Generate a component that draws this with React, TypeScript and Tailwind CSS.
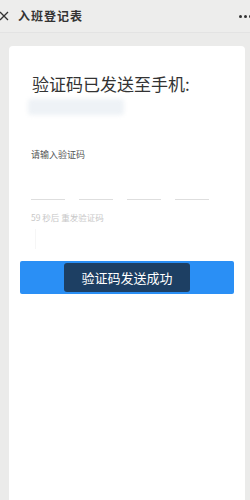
import React from "react";

export default function App() {
  return (
    <div
      className="w-[250px] h-[500px] bg-[#ebebea] flex flex-col overflow-hidden"
      style={{ fontFamily: '"Noto Sans CJK SC", "Noto Sans", sans-serif' }}
    >
      <div className="h-[33px] flex items-center border-b border-[#e3e3e3] bg-[#ededec] shrink-0">
        <svg width="10" height="10" viewBox="0 0 10 10" className="ml-[-1px]">
          <path d="M1 1 L9 9 M9 1 L1 9" stroke="#333" strokeWidth="1.3" />
        </svg>
        <span className="ml-[9px] text-[12px] font-semibold text-[#333] tracking-[1px]" style={{ fontFamily: '"Noto Sans CJK SC", serif' }}>
          入班登记表
        </span>
        <div className="ml-auto mr-[-2px] flex gap-[2px]">
          <span className="w-[3px] h-[3px] rounded-full bg-[#333]" />
          <span className="w-[3px] h-[3px] rounded-full bg-[#333]" />
          <span className="w-[3px] h-[3px] rounded-full bg-[#333]" />
        </div>
      </div>
      <div className="flex-1 mt-[13px] ml-[9px] mr-[5px] bg-white rounded-t-[4px] pt-[27px] flex flex-col">
        <div className="ml-[23px] text-[17px] leading-[22px] text-[#333]">验证码已发送至手机:</div>
        <div className="ml-[19px] mt-[4px] w-[96px] h-[16px] bg-[#eef2f6] blur-[2px] rounded-[3px]" />
        <div className="ml-[22px] mt-[34px] text-[9px] leading-[12px] text-[#555]">请输入验证码</div>
        <div className="ml-[22px] mt-[38px] flex gap-[14px]">
          <div className="w-[34px] h-[1px] bg-[#dedede]" />
          <div className="w-[34px] h-[1px] bg-[#dedede]" />
          <div className="w-[34px] h-[1px] bg-[#dedede]" />
          <div className="w-[34px] h-[1px] bg-[#dedede]" />
        </div>
        <div className="ml-[22px] mt-[11px] text-[8.5px] leading-[12px] text-[#c8c8c8]">59 秒后 重发验证码</div>
        <div className="ml-[26px] mt-[6px] w-[1px] h-[20px] bg-[#f6f6f6]" />
        <div className="mx-[11px] mt-[12px] h-[33px] rounded-[2px] bg-[#2a8ff5] flex items-center justify-center">
          <div className="w-[126px] h-[29px] rounded-[3px] bg-[#1d3f63] flex items-center justify-center text-white text-[13px]">
            验证码发送成功
          </div>
        </div>
      </div>
    </div>
  );
}
